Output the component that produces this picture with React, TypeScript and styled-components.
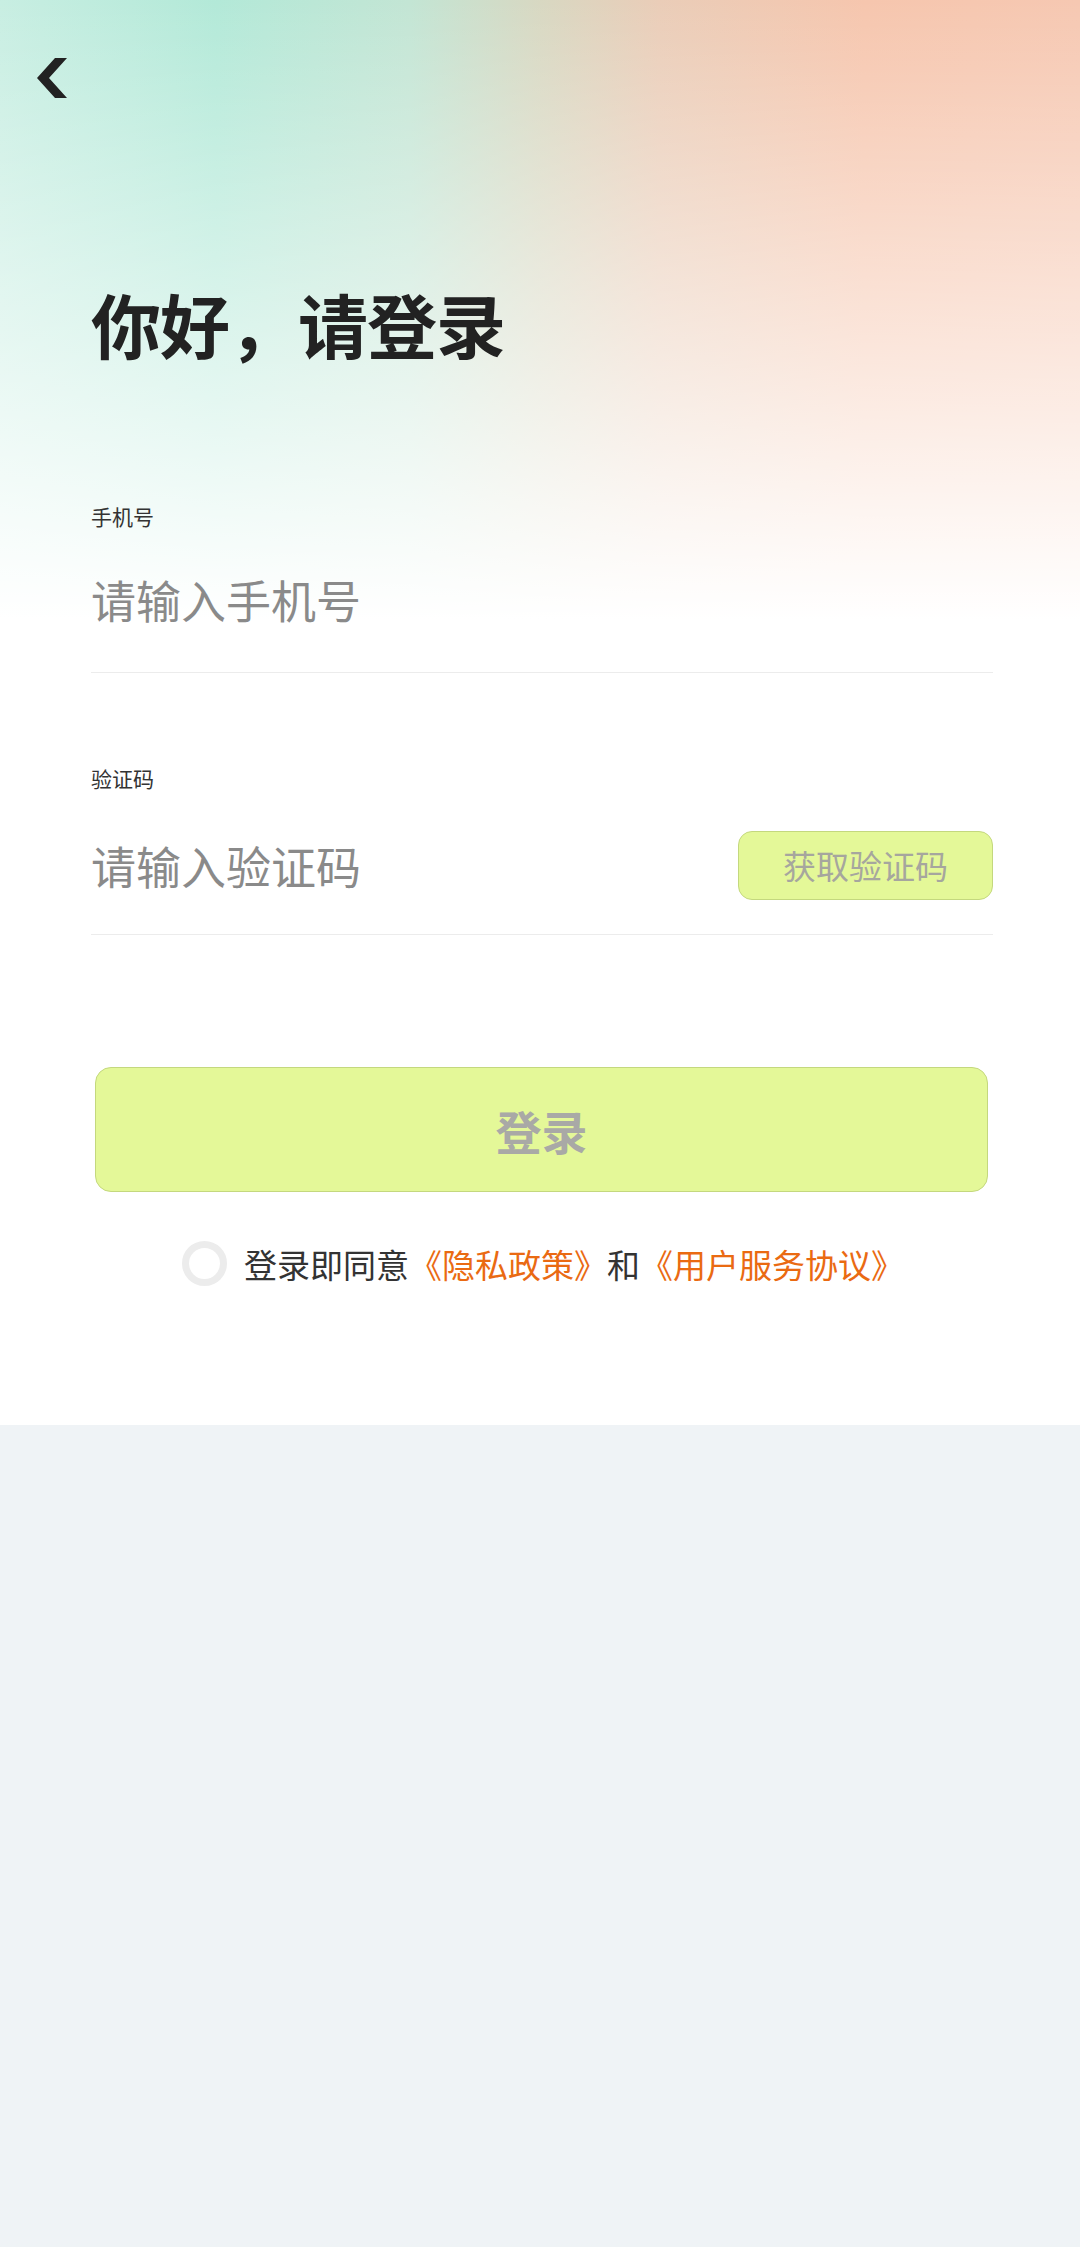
import React from "react";
import styled, { createGlobalStyle } from "styled-components";

const GlobalStyle = createGlobalStyle`
  html, body {
    margin: 0;
    padding: 0;
    background: #eff3f6;
    font-family: "Noto Sans CJK SC", "Noto Sans", sans-serif;
  }
  * { box-sizing: border-box; }
`;

const Page = styled.div`
  width: 1080px;
  height: 1425px;
  background-color: #fff;
  background-image:
    linear-gradient(to bottom, rgba(255, 255, 255, 0) 0px, #ffffff 620px),
    linear-gradient(
      to right,
      #c8eee2 0%,
      #b3e9d8 20%,
      #c3e5d4 38%,
      #d8d8c2 50%,
      #eacdb8 61%,
      #f6c6ae 80%,
      #f6c8b2 100%
    );
  background-repeat: no-repeat;
  display: flex;
  flex-direction: column;
`;

const TopBar = styled.div`
  padding: 58px 0 0 37px;
  height: 98px;
  display: flex;
  align-items: flex-start;
`;

const BackButton = styled.button`
  border: none;
  background: none;
  padding: 0;
  width: 30px;
  height: 40px;
  display: block;
  cursor: pointer;
`;

const Content = styled.div`
  padding: 0 87px 0 91px;
  display: flex;
  flex-direction: column;
`;

const Title = styled.h1`
  margin: 191px 0 0 0;
  font-size: 70px;
  line-height: 70px;
  font-weight: 700;
  color: #222;
  letter-spacing: -1px;
`;

const Field = styled.div<{ $gap: number }>`
  margin-top: ${(p) => p.$gap}px;
  display: flex;
  flex-direction: column;
`;

const Label = styled.label`
  font-size: 21px;
  line-height: 21px;
  color: #333;
`;

const InputRow = styled.div<{ $shift: number }>`
  height: 146px;
  padding-top: ${(p) => p.$shift}px;
  display: flex;
  align-items: center;
  justify-content: space-between;
  border-bottom: 1px solid #ececec;
`;

const Input = styled.input`
  flex: 1;
  min-width: 0;
  border: none;
  outline: none;
  background: transparent;
  padding: 0;
  font-family: "Noto Sans CJK SC", sans-serif;
  font-size: 45px;
  line-height: 50px;
  height: 50px;
  color: #333;
  &::placeholder {
    color: #8a8a8a;
  }
`;

const CodeButton = styled.button`
  width: 255px;
  height: 69px;
  border-radius: 14px;
  border: 1.5px solid #c4d87e;
  background: #e4f898;
  color: #a6a69e;
  font-family: "Noto Sans CJK SC", sans-serif;
  font-size: 33px;
  line-height: 1;
  padding: 0;
  flex-shrink: 0;
`;

const LoginButton = styled.button`
  margin: 132px 5px 0 4px;
  height: 125px;
  border-radius: 16px;
  border: 1.5px solid #c4d87e;
  background: #e4f898;
  color: #a9a9a6;
  font-family: "Noto Sans CJK SC", sans-serif;
  font-size: 46px;
  font-weight: 700;
  line-height: 1;
`;

const Agreement = styled.div`
  margin-top: 49px;
  display: flex;
  align-items: center;
  justify-content: center;
  gap: 17px;
  padding-left: 2px;
`;

const Radio = styled.span`
  width: 45px;
  height: 45px;
  border-radius: 50%;
  border: 7px solid #ececec;
  background: #fff;
  flex-shrink: 0;
`;

const AgreeText = styled.p`
  margin: 0;
  font-size: 33px;
  line-height: 44px;
  color: #333;
  white-space: nowrap;
`;

const Link = styled.span`
  color: #ea6a12;
`;

function BackIcon() {
  return (
    <svg width="30" height="40" viewBox="0 0 30 40">
      <polygon points="18,0 30,0 12,20 30,40 18,40 0,20" fill="#222" />
    </svg>
  );
}

export default function App() {
  return (
    <>
      <GlobalStyle />
      <Page>
        <TopBar>
          <BackButton aria-label="返回">
            <BackIcon />
          </BackButton>
        </TopBar>
        <Content>
          <Title>你好，请登录</Title>
          <Field $gap={147}>
            <Label>手机号</Label>
            <InputRow $shift={0}>
              <Input placeholder="请输入手机号" />
            </InputRow>
          </Field>
          <Field $gap={95}>
            <Label>验证码</Label>
            <InputRow $shift={8}>
              <Input placeholder="请输入验证码" />
              <CodeButton>获取验证码</CodeButton>
            </InputRow>
          </Field>
          <LoginButton>登录</LoginButton>
          <Agreement>
            <Radio />
            <AgreeText>
              登录即同意<Link>《隐私政策》</Link>和<Link>《用户服务协议》</Link>
            </AgreeText>
          </Agreement>
        </Content>
      </Page>
    </>
  );
}
